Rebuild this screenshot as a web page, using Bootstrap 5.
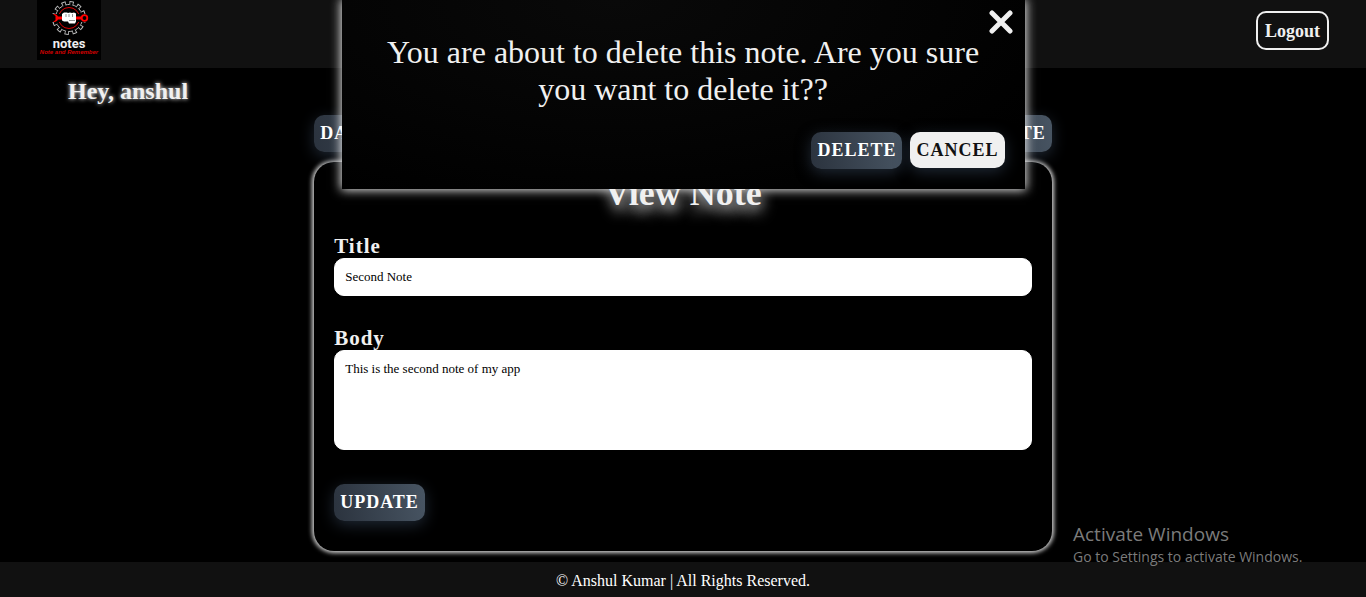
<!DOCTYPE html>
<html lang="en">
<head>
<meta charset="utf-8">
<meta name="viewport" content="width=device-width, initial-scale=1">
<title>Notes - View Note</title>
<link href="https://cdn.jsdelivr.net/npm/bootstrap@5.3.0/dist/css/bootstrap.min.css" rel="stylesheet">
<style>
  body { background: #000; color: #f0f0f0; font-family: "Liberation Serif", serif; }
  .site-bar, .site-foot { background: #111; }
  .site-bar { height: 68px; padding: 0 37px; }
  .logout-btn { height: 39px; padding: 0 7px; border: 2px solid #f0f0f0; border-radius: 10px; color: #f0f0f0; font-size: 18px; font-weight: 700; line-height: 20px; margin-top: 11px; }
  .greeting { margin: 10px 68px; font-size: 24px; line-height: 27px; font-weight: 700; text-shadow: 0 0 4px #f0f0f0; }
  .note-column { width: 54%; }
  .slate-btn, .plain-btn { height: 37px; padding: 0 6px 1px; border: 0; border-radius: 10px; font-size: 18px; line-height: 20px; font-weight: 700; letter-spacing: 1px; text-transform: uppercase; box-shadow: 0 4px 15px #1f2834; }
  .slate-btn { color: #fff; background: linear-gradient(80deg, #2b333e, #485563); }
  .slate-btn:hover { color: #fff; background: #485563; }
  .plain-btn { height: 36px; color: #111; background: #f0f0f0; }
  .note-panel { margin-top: 10px; padding: 11px 20px 30px; border-radius: 20px; box-shadow: 0 0 4px 2px #d0d0d0; }
  .note-panel h1 { font-size: 36px; line-height: 41px; font-weight: 700; text-shadow: 2px 6px 14px #f0f0f0; }
  .field-label { font-size: 21px; line-height: 24px; font-weight: 700; letter-spacing: 1px; }
  .body-field { margin-top: 30px; }
  .save-btn { margin-top: 34px; }
  .field-box { padding: 10px; border: 1px solid #fff; border-radius: 10px; color: #000; background: #fff; font-size: 13px; line-height: 16px; }
  .field-box:focus { color: #000; background: #fff; }
  textarea.field-box { height: 100px; resize: none; }
  .site-foot { height: 35px; padding-top: 10px; font-size: 16px; line-height: 18px; color: #fff; }
  .confirm-box { left: 25%; width: 50%; padding: 34px 20px 20px; background: radial-gradient(ellipse at 40% 0, #090909, #000 85%); box-shadow: 0 0 10px 1px #f0f0f0; }
  .confirm-box p { font-size: 32px; line-height: 37px; }
  .dismiss-btn { top: 10px; right: 12px; width: 24px; height: 24px; color: #f0f0f0; }
  .os-notice { left: 1073px; bottom: 30px; color: #7b7b7b; font-family: "Open Sans", sans-serif; pointer-events: none; }
  .os-notice strong { font-size: 19px; line-height: 26px; font-weight: 400; }
  .os-notice span { font-size: 14px; line-height: 20px; }
</style>
</head>
<body class="d-flex flex-column min-vh-100">
<header class="site-bar d-flex justify-content-between align-items-start">
  <a href="#" aria-label="notes home" class="d-block">
    <svg width="64" height="60" viewBox="0 0 64 60" class="d-block">
      <rect width="64" height="60" fill="#000"/>
      <circle cx="32" cy="18" r="15" fill="none" stroke="#bbb" stroke-width="4" stroke-dasharray="4.200 3.654"/>
      <circle cx="32" cy="18" r="14.300" fill="none" stroke="#000" stroke-width="3.400" stroke-dasharray="2.400 5.088" stroke-dashoffset="-.85"/>
      <circle cx="32" cy="18" r="13.500" fill="none" stroke="#bbb" stroke-width="1" stroke-dasharray="3.300 3.768" stroke-dashoffset="3.500"/>
      <circle cx="32" cy="18" r="10.500" fill="none" stroke="#e00000" stroke-width="1"/>
      <path d="M13 14h38v8H13z" fill="#000"/>
      <path d="M25 16.500h-4c-1-2-2.500-2.500-5-2.500l2.500 2v4l-2.500 2c2.500 0 4-.5 5-2.500h4z" fill="#f00"/>
      <path d="M38 16.500h8v3h-8z" fill="#f00"/>
      <circle cx="47.500" cy="18" r="2.800" fill="#000" stroke="#f00" stroke-width="1.800"/>
      <path d="M25 14l2-1.500h3l1 .5 2-.5 2 .5 2-.5 2 1v8l-1 2h-6l-1-2h-4l-2-1z" fill="#fff"/>
      <path d="M29 14v3M32 14v3M35.500 14v3M32 20.500h6" stroke="#666" stroke-width=".7"/>
      <text x="32" y="48" text-anchor="middle" fill="#eee" font-family="Liberation Sans Narrow, Roboto, sans-serif" font-size="13" font-weight="700">notes</text>
      <text x="32" y="54" text-anchor="middle" fill="#d00000" font-family="Liberation Sans, sans-serif" font-size="6" font-weight="700" font-style="italic">Note and Remember</text>
    </svg>
  </a>
  <button type="button" class="btn logout-btn">Logout</button>
</header>
<main class="flex-grow-1">
  <h2 class="greeting">Hey, anshul</h2>
  <div class="note-column mx-auto">
    <div class="d-flex justify-content-between">
      <button type="button" class="btn slate-btn">Dashboard</button>
      <button type="button" class="btn slate-btn">Delete</button>
    </div>
    <form class="note-panel">
      <h1 class="text-center mb-0">View Note</h1>
      <div class="d-flex flex-column mt-3 pt-1">
        <label class="field-label" for="noteTitle">Title</label>
        <input class="form-control field-box" id="noteTitle" type="text" value="Second Note">
      </div>
      <div class="body-field d-flex flex-column">
        <label class="field-label" for="noteBody">Body</label>
        <textarea class="form-control field-box" id="noteBody">This is the second note of my app</textarea>
      </div>
      <button type="button" class="btn slate-btn save-btn d-block">Update</button>
    </form>
  </div>
</main>
<footer class="site-foot text-center">© Anshul Kumar | All Rights Reserved.</footer>

<div class="confirm-box position-absolute top-0" role="dialog" aria-labelledby="confirmText">
  <button type="button" class="btn dismiss-btn position-absolute border-0 p-0 d-flex" aria-label="Close">
    <svg width="24" height="24" viewBox="0 0 24 24"><path d="M3 3l18 18M21 3L3 21" stroke="currentColor" stroke-width="5" stroke-linecap="round"/></svg>
  </button>
  <p class="text-center mb-4" id="confirmText">You are about to delete this note. Are you sure you want to delete it??</p>
  <div class="d-flex justify-content-end gap-2">
    <button type="button" class="btn slate-btn">Delete</button>
    <button type="button" class="btn plain-btn">Cancel</button>
  </div>
</div>
<div class="os-notice position-absolute d-flex flex-column">
  <strong>Activate Windows</strong>
  <span>Go to Settings to activate Windows.</span>
</div>
<script src="https://cdn.jsdelivr.net/npm/bootstrap@5.3.0/dist/js/bootstrap.bundle.min.js"></script>
</body>
</html>
